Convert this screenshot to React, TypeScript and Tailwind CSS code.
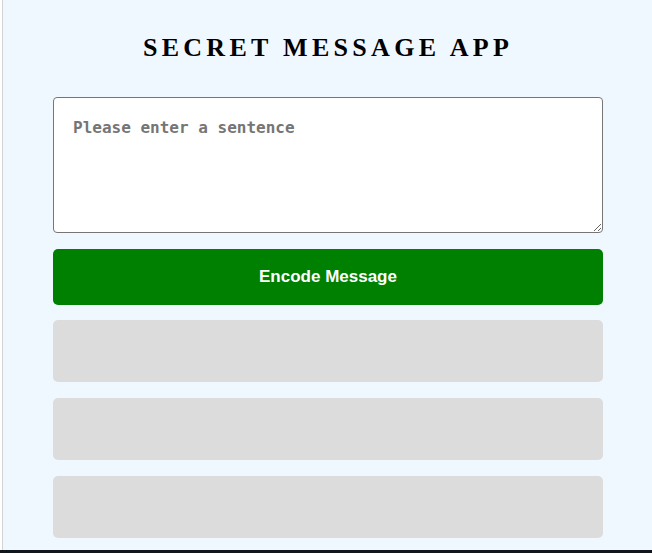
import React from "react";

export default function App() {
  return (
    <div className="w-[652px] h-[553px] bg-white flex flex-col overflow-hidden">
      <div className="h-[550px] ml-[2px] border-l border-[#d3d3d3] bg-[#f0f8ff] flex flex-col">
        <div className="ml-[50px] w-[550px] flex flex-col pt-[33px]">
          <h1
            className="text-center font-bold text-[26px] leading-[30px] tracking-[4.3px] text-black"
            style={{ fontFamily: '"Liberation Serif", "Times New Roman", serif' }}
          >
            SECRET MESSAGE APP
          </h1>
          <textarea
            className="mt-[34px] w-[550px] h-[136px] bg-white border border-[#767676] rounded-[4px] px-[19px] py-[18px] text-[16px] font-bold placeholder:text-[#757575] outline-none"
            style={{ fontFamily: '"DejaVu Sans Mono", monospace' }}
            placeholder="Please enter a sentence"
          />
          <button
            className="mt-[16px] h-[56px] w-full bg-[#008000] rounded-[5px] text-white font-bold text-[17px]"
            style={{ fontFamily: '"Liberation Sans", Arial, sans-serif' }}
          >
            Encode Message
          </button>
          <div className="mt-[15px] h-[62px] bg-[#dcdcdc] rounded-[5px]" />
          <div className="mt-[16px] h-[62px] bg-[#dcdcdc] rounded-[5px]" />
          <div className="mt-[16px] h-[62px] bg-[#dcdcdc] rounded-[5px]" />
        </div>
      </div>
      <div className="h-[3px] bg-[#10161c]" />
    </div>
  );
}
